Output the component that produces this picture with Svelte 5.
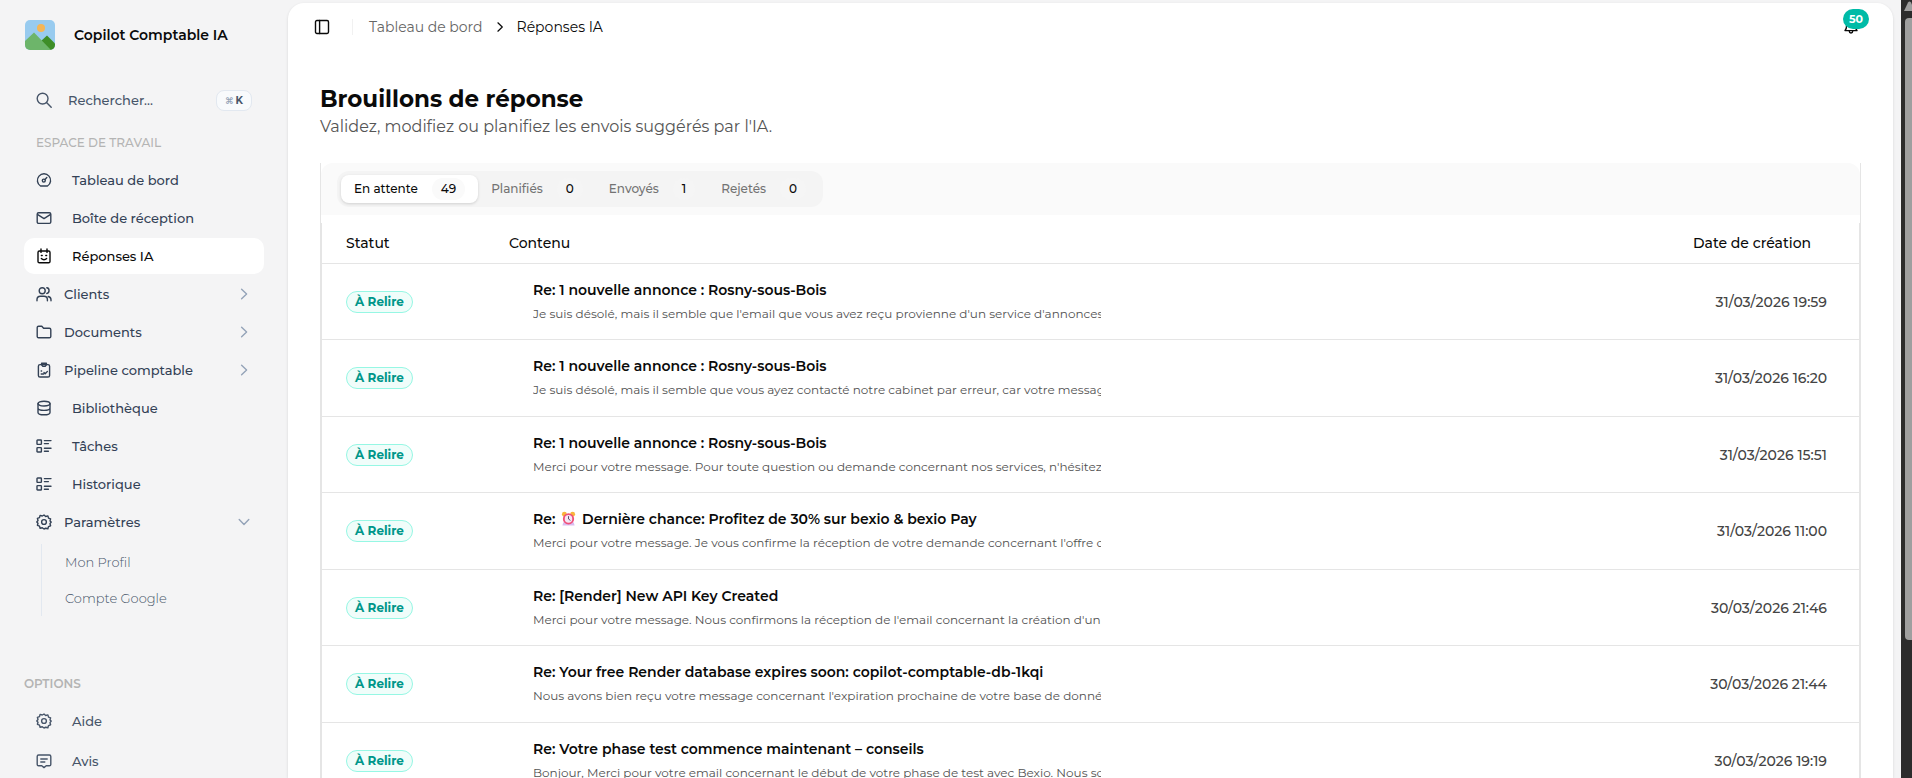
<script>
    // Sidebar entries
    const navItems = [
        { label: 'Tableau de bord', icon: 'gauge' },
        { label: 'Boîte de réception', icon: 'mail' },
        { label: 'Réponses IA', icon: 'bot' },
        { label: 'Clients', icon: 'users', group: true },
        { label: 'Documents', icon: 'folder', group: true },
        { label: 'Pipeline comptable', icon: 'clipboard', group: true },
        { label: 'Bibliothèque', icon: 'database' },
        { label: 'Tâches', icon: 'list' },
        { label: 'Historique', icon: 'list' },
        { label: 'Paramètres', icon: 'gear', group: true, children: ['Mon Profil', 'Compte Google'] },
    ];

    const options = [
        { label: 'Aide', icon: 'gear' },
        { label: 'Avis', icon: 'message' },
    ];

    const tabs = [
        { label: 'En attente', count: 49 },
        { label: 'Planifiés', count: 0 },
        { label: 'Envoyés', count: 1 },
        { label: 'Rejetés', count: 0 },
    ];

    const drafts = [
        {
            subject: 'Re: 1 nouvelle annonce : Rosny-sous-Bois',
            preview: "Je suis désolé, mais il semble que l'email que vous avez reçu provienne d'un service d'annonces",
            date: '31/03/2026 19:59',
        },
        {
            subject: 'Re: 1 nouvelle annonce : Rosny-sous-Bois',
            preview: 'Je suis désolé, mais il semble que vous ayez contacté notre cabinet par erreur, car votre message',
            date: '31/03/2026 16:20',
        },
        {
            subject: 'Re: 1 nouvelle annonce : Rosny-sous-Bois',
            preview: "Merci pour votre message. Pour toute question ou demande concernant nos services, n'hésitez",
            date: '31/03/2026 15:51',
        },
        {
            subject: 'Dernière chance: Profitez de 30% sur bexio & bexio Pay',
            alarm: true,
            preview: "Merci pour votre message. Je vous confirme la réception de votre demande concernant l'offre de",
            date: '31/03/2026 11:00',
        },
        {
            subject: 'Re: [Render] New API Key Created',
            preview: "Merci pour votre message. Nous confirmons la réception de l'email concernant la création d'un",
            date: '30/03/2026 21:46',
        },
        {
            subject: 'Re: Your free Render database expires soon: copilot-comptable-db-1kqi',
            preview: "Nous avons bien reçu votre message concernant l'expiration prochaine de votre base de données",
            date: '30/03/2026 21:44',
        },
        {
            subject: 'Re: Votre phase test commence maintenant – conseils',
            preview: 'Bonjour, Merci pour votre email concernant le début de votre phase de test avec Bexio. Nous sommes',
            date: '30/03/2026 19:19',
        },
    ];

    let activeNav = $state('Réponses IA');
    let activeTab = $state('En attente');
    let search = $state('');
</script>

{#snippet icon(name)}
    <svg class="icon" viewBox="0 0 16 16" aria-hidden="true">
        {#if name === 'gauge'}
            <path d="M4.5 14a6.6 6.6 0 1 1 7 0z" />
            <circle cx="7.8" cy="8.6" r="1.5" />
            <path d="m9 7.4 1.8-1.9" />
        {:else if name === 'mail'}
            <rect x="1.2" y="2.8" width="13.6" height="10.6" rx="1.4" />
            <path d="m1.8 4.6 6.2 4 6.2-4" />
        {:else if name === 'bot'}
            <rect x="2" y="3" width="12" height="11.8" rx="1.4" />
            <path d="M5 1v3.4M11 1v3.4M5.4 7.5h.8M9.8 7.5h.8M5.4 10.5c1.4 1.6 3.8 1.6 5.2 0" />
        {:else if name === 'users'}
            <circle cx="6.2" cy="4.7" r="3" />
            <path d="M1 14.8v-1.3c0-2 1.5-3.3 3.4-3.3H8c2 0 3.4 1.3 3.4 3.3v1.3M10.8 1.8c3 .4 3 5.2 0 5.7M12.2 10.5c1.8.4 2.8 1.6 2.8 3.2v1.1" />
        {:else if name === 'folder'}
            <path d="M1.2 12.4V3.6c0-.8.6-1.4 1.4-1.4h3.2l1.8 2.1h5.8c.8 0 1.4.6 1.4 1.4v6.7c0 .8-.6 1.4-1.4 1.4H2.6c-.8 0-1.4-.6-1.4-1.4z" />
        {:else if name === 'clipboard'}
            <rect x="2.4" y="2.6" width="11.2" height="12.4" rx="1.6" />
            <path d="M5.6 1.2h4.8v1.6L9.2 4.2H6.8L5.6 2.8zM5.2 9h.4M5.2 12h2.4M8 10.6l1.2 1.2 2.2-2.4" />
        {:else if name === 'database'}
            <ellipse cx="8" cy="3.6" rx="6" ry="2.4" />
            <path d="M2 3.6v8.8c0 1.4 2.7 2.4 6 2.4s6-1 6-2.4V3.6M2 8c0 1.4 2.7 2.4 6 2.4s6-1 6-2.4" />
        {:else if name === 'list'}
            <rect x="1" y="2" width="4.4" height="4.4" rx=".6" />
            <rect x="1" y="9.6" width="4.4" height="4.4" rx=".6" />
            <path d="M8.4 2.6H15M8.4 5.6h4M8.4 10.2H15M8.4 13.2h4" />
        {:else if name === 'gear'}
            <path d="M8 1l1.7 1.5 2.2-.6.6 2.2 2.1.8-.6 2.1L15.2 8l-1.2 1.7.6 2.1-2.1.8-.6 2.2-2.2-.6L8 15l-1.7-1.3-2.2.6-.6-2.2-2.1-.8.6-2.1L.8 8 2 6.5l-.6-2.1 2.1-.8.6-2.2 2.2.6z" />
            <circle cx="8" cy="8" r="2.4" />
        {:else if name === 'message'}
            <path d="M2.6 2h10.8c.8 0 1.4.6 1.4 1.4v8c0 .8-.6 1.4-1.4 1.4h-3.2L8 14.6l-2.2-1.8H2.6c-.8 0-1.4-.6-1.4-1.4v-8C1.2 2.6 1.8 2 2.6 2zM4.8 6h6.4M4.8 9h4" />
        {:else if name === 'search'}
            <circle cx="6.6" cy="6.6" r="5.4" />
            <path d="m10.8 10.8 4.4 4.4" />
        {:else if name === 'right'}
            <path d="m5.6 3.2 5 4.8-5 4.8" />
        {:else if name === 'down'}
            <path d="m3.2 5.6 4.8 5 4.8-5" />
        {:else if name === 'panel'}
            <rect x="1.5" y="1.5" width="13" height="13" rx="1.4" />
            <path d="M5.6 1.5v13" />
        {:else if name === 'bell'}
            <path d="M2 11.6c1.2-1.2 1.6-2 1.6-5.2a4.4 4.4 0 0 1 8.8 0c0 3.2.4 4 1.6 5.2zM6.2 12c.2 2.6 3.4 2.6 3.6 0" />
        {/if}
    </svg>
{/snippet}

<div class="app">
    <aside class="sidebar">
        <div class="brand">
            <svg class="logo" viewBox="0 0 30 30" aria-hidden="true">
                <clipPath id="logo-clip"><rect width="30" height="30" rx="5" /></clipPath>
                <g clip-path="url(#logo-clip)">
                    <rect width="30" height="30" fill="#98cbef" />
                    <circle cx="16" cy="8" r="4" fill="#f4b657" />
                    <path d="M15 22l7-6.5 8 8V30H16z" fill="#3e8e27" />
                    <path d="M0 21l9-8.5L26 30H0z" fill="#6db56a" />
                </g>
            </svg>
            <span>Copilot Comptable IA</span>
        </div>

        <label class="search">
            {@render icon('search')}
            <input type="text" placeholder="Rechercher..." aria-label="Rechercher" bind:value={search} />
            <kbd><span>⌘</span>K</kbd>
        </label>

        <h2 class="section-title">Espace de travail</h2>
        <nav>
            {#each navItems as item}
                {#if item.group}
                    <button class="nav-item group" onclick={() => (activeNav = item.label)}>
                        {@render icon(item.icon)}
                        <span>{item.label}</span>
                        <span class="chevron">{@render icon(item.children ? 'down' : 'right')}</span>
                    </button>
                {:else}
                    <a class="nav-item" class:active={activeNav === item.label} href="#/">
                        {@render icon(item.icon)}
                        <span>{item.label}</span>
                    </a>
                {/if}
                {#if item.children}
                    <div class="sub-nav">
                        {#each item.children as child}
                            <a href="#/">{child}</a>
                        {/each}
                    </div>
                {/if}
            {/each}
        </nav>

        <h2 class="section-title options-title">Options</h2>
        <nav class="options">
            {#each options as item}
                <a class="nav-item" href="#/">
                    {@render icon(item.icon)}
                    <span>{item.label}</span>
                </a>
            {/each}
        </nav>
    </aside>

    <main>
        <header class="topbar">
            <button class="icon-button" aria-label="Menu">{@render icon('panel')}</button>
            <span class="divider"></span>
            <div class="breadcrumb">
                <a href="#/">Tableau de bord</a>
                {@render icon('right')}
                <span>Réponses IA</span>
            </div>
            <button class="icon-button bell" aria-label="Notifications">
                {@render icon('bell')}
                <span class="bell-count">50</span>
            </button>
        </header>

        <div class="content">
            <h1>Brouillons de réponse</h1>
            <p class="subtitle">Validez, modifiez ou planifiez les envois suggérés par l'IA.</p>

            <section class="panel">
                <div class="panel-head">
                    <div class="tabs" role="tablist">
                        {#each tabs as tab}
                            <button
                                class="tab"
                                class:selected={activeTab === tab.label}
                                role="tab"
                                aria-selected={activeTab === tab.label}
                                onclick={() => (activeTab = tab.label)}
                            >
                                {tab.label}
                                <span class="count">{tab.count}</span>
                            </button>
                        {/each}
                    </div>
                </div>

                <div class="table-wrap">
                    <table>
                        <thead>
                            <tr>
                                <th class="col-status">Statut</th>
                                <th>Contenu</th>
                                <th class="col-date">Date de création</th>
                            </tr>
                        </thead>
                        <tbody>
                            {#each drafts as draft}
                                <tr>
                                    <td><span class="badge">À Relire</span></td>
                                    <td class="message">
                                        <div class="subject">
                                            {#if draft.alarm}
                                                Re:
                                                <svg class="alarm" viewBox="0 0 16 16" aria-hidden="true">
                                                    <circle cx="3.6" cy="3.4" r="2.6" fill="#f9b43c" />
                                                    <circle cx="12.4" cy="3.4" r="2.6" fill="#f9b43c" />
                                                    <path d="M2.5 12h11l1 3.5h-13z" fill="#d9bdf0" />
                                                    <circle cx="8" cy="8.4" r="6" fill="#f0507a" />
                                                    <circle cx="8" cy="8.4" r="4" fill="#f4e6f4" />
                                                    <path d="M8 5.5v3l2 1.5" fill="none" stroke="#56406b" />
                                                </svg>
                                            {/if}
                                            {draft.subject}
                                        </div>
                                        <div class="preview">{draft.preview}</div>
                                    </td>
                                    <td class="date">{draft.date}</td>
                                </tr>
                            {/each}
                        </tbody>
                    </table>
                </div>
            </section>
        </div>
    </main>

    <div class="scrollbar" aria-hidden="true">
        <svg viewBox="0 0 8 12"><path d="M0 11 4 2.5q1.5-2 3 0L11 11z" fill="#9f9f9f" /></svg>
        <div class="thumb"></div>
    </div>
</div>

<style>
    :global(body) {
        margin: 0;
        overflow: hidden;
    }

    .app {
        display: flex;
        height: 100vh;
        overflow: hidden;
        background: #f4f4f5;
        color: #0a0a0a;
        font-family: Montserrat, Inter, 'Liberation Sans', sans-serif;
        font-size: 14px;
        line-height: 20px;
    }

    a {
        color: inherit;
        text-decoration: none;
    }

    button,
    input {
        padding: 0;
        border: 0;
        background: none;
        color: inherit;
        font: inherit;
        text-align: left;
    }

    button {
        cursor: pointer;
    }

    .icon {
        flex: none;
        width: 16px;
        height: 16px;
        fill: none;
        stroke: currentColor;
        stroke-width: 1.4;
        stroke-linecap: round;
        stroke-linejoin: round;
    }

    /* Sidebar */
    .sidebar {
        box-sizing: border-box;
        flex: none;
        width: 288px;
        padding: 20px 24px 0;
        color: #334155;
        font-size: 13px;
        font-weight: 500;
    }

    .brand {
        display: flex;
        align-items: center;
        gap: 19px;
        height: 30px;
        padding-left: 1px;
        margin-bottom: 32px;
        color: #0a0a0a;
        font-size: 14px;
        font-weight: 600;
    }

    .logo {
        width: 30px;
        height: 30px;
    }

    .search {
        display: flex;
        align-items: center;
        height: 36px;
        padding: 0 12px;
        margin-bottom: 15px;
        color: #475569;
    }

    .search input {
        flex: 1;
        min-width: 0;
        padding-left: 16px;
        outline: none;
    }

    .search input::placeholder {
        color: #475569;
        opacity: 1;
    }

    kbd {
        display: flex;
        align-items: center;
        gap: 2px;
        padding: 0 8px;
        border: 1px solid #e2e8f0;
        border-radius: 8px;
        background: #f8fafc;
        font-family: inherit;
        font-size: 10px;
        font-weight: 700;
        line-height: 19px;
    }

    kbd span {
        font-size: 9px;
        color: #94a3b8;
    }

    .section-title {
        margin: 0 12px 9px;
        color: #b4b4b4;
        font-size: 12px;
        font-weight: 500;
        line-height: 20px;
        text-transform: uppercase;
    }

    .nav-item {
        box-sizing: border-box;
        display: flex;
        align-items: center;
        gap: 20px;
        width: 100%;
        height: 36px;
        padding: 0 12px;
        margin-bottom: 2px;
        border-radius: 10px;
    }

    .nav-item.group {
        gap: 12px;
    }

    .nav-item.active {
        background: #fff;
        color: #0a0a0a;
    }

    .chevron {
        display: flex;
        margin-left: auto;
        color: #94a3b8;
    }

    .sub-nav {
        display: flex;
        flex-direction: column;
        padding-left: 23px;
        margin: 4px 0 58px 17px;
        border-left: 1px solid #e2e8f0;
        color: #475569;
        font-weight: 300;
    }

    .sub-nav a {
        line-height: 36px;
    }

    .options-title {
        margin: 0 0 9px;
        font-weight: 600;
    }

    .options {
        color: #475569;
    }

    .options .nav-item {
        margin-bottom: 4px;
    }

    /* Main */
    main {
        flex: 1;
        min-width: 0;
        margin: 3px 8px 0 0;
        border-radius: 16px 16px 0 0;
        background: #fff;
        box-shadow: 0 1px 3px rgba(0, 0, 0, 0.12);
    }

    .topbar {
        display: flex;
        align-items: center;
        height: 48px;
        padding: 0 34px 0 26px;
    }

    .icon-button {
        display: flex;
    }

    .divider {
        width: 1px;
        height: 16px;
        margin: 0 16px 0 22px;
        background: #f1f1f1;
    }

    .breadcrumb {
        display: flex;
        align-items: center;
        gap: 10px;
    }

    .breadcrumb a {
        color: #666;
    }

    .breadcrumb .icon {
        width: 14px;
        height: 14px;
    }

    .bell {
        position: relative;
        margin-left: auto;
    }

    .bell-count {
        position: absolute;
        top: -10px;
        right: -10px;
        padding: 0 6px;
        border-radius: 10px;
        background: #00bba7;
        color: #fff;
        font-size: 11px;
        font-weight: 700;
        line-height: 20px;
    }

    .content {
        padding: 32px 32px 0;
    }

    h1 {
        margin: 0;
        font-size: 23px;
        font-weight: 700;
        line-height: 32px;
    }

    .subtitle {
        margin: 0 0 24px;
        color: #555;
        font-size: 16px;
        line-height: 24px;
    }

    .panel {
        border: solid #e5e5e5;
        border-width: 0 1px;
    }

    .panel-head {
        padding: 8px 16px;
        margin-bottom: 8px;
        border-radius: 12px 12px 0 0;
        background: #fafafa;
    }

    .tabs {
        display: inline-flex;
        padding: 4px;
        border-radius: 12px;
        background: #f4f4f4;
        vertical-align: top;
    }

    .tab {
        display: flex;
        align-items: center;
        gap: 14px;
        height: 28px;
        padding: 0 13px;
        border-radius: 8px;
        color: #737373;
        font-size: 12px;
        font-weight: 500;
    }

    .tab.selected {
        background: #fff;
        box-shadow: 0 1px 3px rgba(0, 0, 0, 0.15);
        color: #0a0a0a;
    }

    .count {
        padding: 0 9px;
        border-radius: 11px;
        background: #f5f5f5;
        color: #0a0a0a;
        line-height: 22px;
    }

    .tab.selected .count {
        background: #fafafa;
    }

    .table-wrap {
        border: solid #e5e5e5;
        border-width: 0 1px;
    }

    table {
        width: 100%;
        border-spacing: 0;
        table-layout: fixed;
    }

    th {
        height: 40px;
        padding: 0 24px;
        border-bottom: 1px solid #e5e5e5;
        font-weight: 500;
        text-align: left;
    }

    .col-status {
        width: 115px;
    }

    .col-date {
        width: 142px;
    }

    td {
        height: 75px;
        padding: 0 24px;
        border-bottom: 1px solid #e5e5e5;
    }

    tr:nth-child(even) td {
        height: 76px;
    }

    .badge {
        display: inline-block;
        padding: 0 8px;
        border: 1px solid #96f7e4;
        border-radius: 11px;
        background: #f0fdfa;
        color: #009689;
        font-size: 12px;
        font-weight: 700;
        vertical-align: middle;
    }

    .message {
        padding-left: 48px;
    }

    .subject {
        font-weight: 600;
    }

    .alarm {
        width: 15px;
        height: 15px;
        margin: 0 2px;
        vertical-align: -2px;
    }

    .preview {
        max-width: 568px;
        margin-top: 4px;
        overflow: hidden;
        color: #525252;
        font-size: 12px;
        white-space: nowrap;
    }

    .date {
        padding-right: 32px;
        color: #444;
        font-weight: 500;
        text-align: right;
        white-space: nowrap;
    }

    /* Window scrollbar */
    .scrollbar {
        display: flex;
        flex-direction: column;
        align-items: flex-end;
        flex: none;
        width: 11px;
        background: #2c2c2c;
    }

    .scrollbar svg {
        width: 8px;
        height: 12px;
        margin-bottom: 6px;
    }

    .thumb {
        width: 7px;
        height: 80%;
        border-radius: 4px 0 0 4px;
        background: #9f9f9f;
    }
</style>
